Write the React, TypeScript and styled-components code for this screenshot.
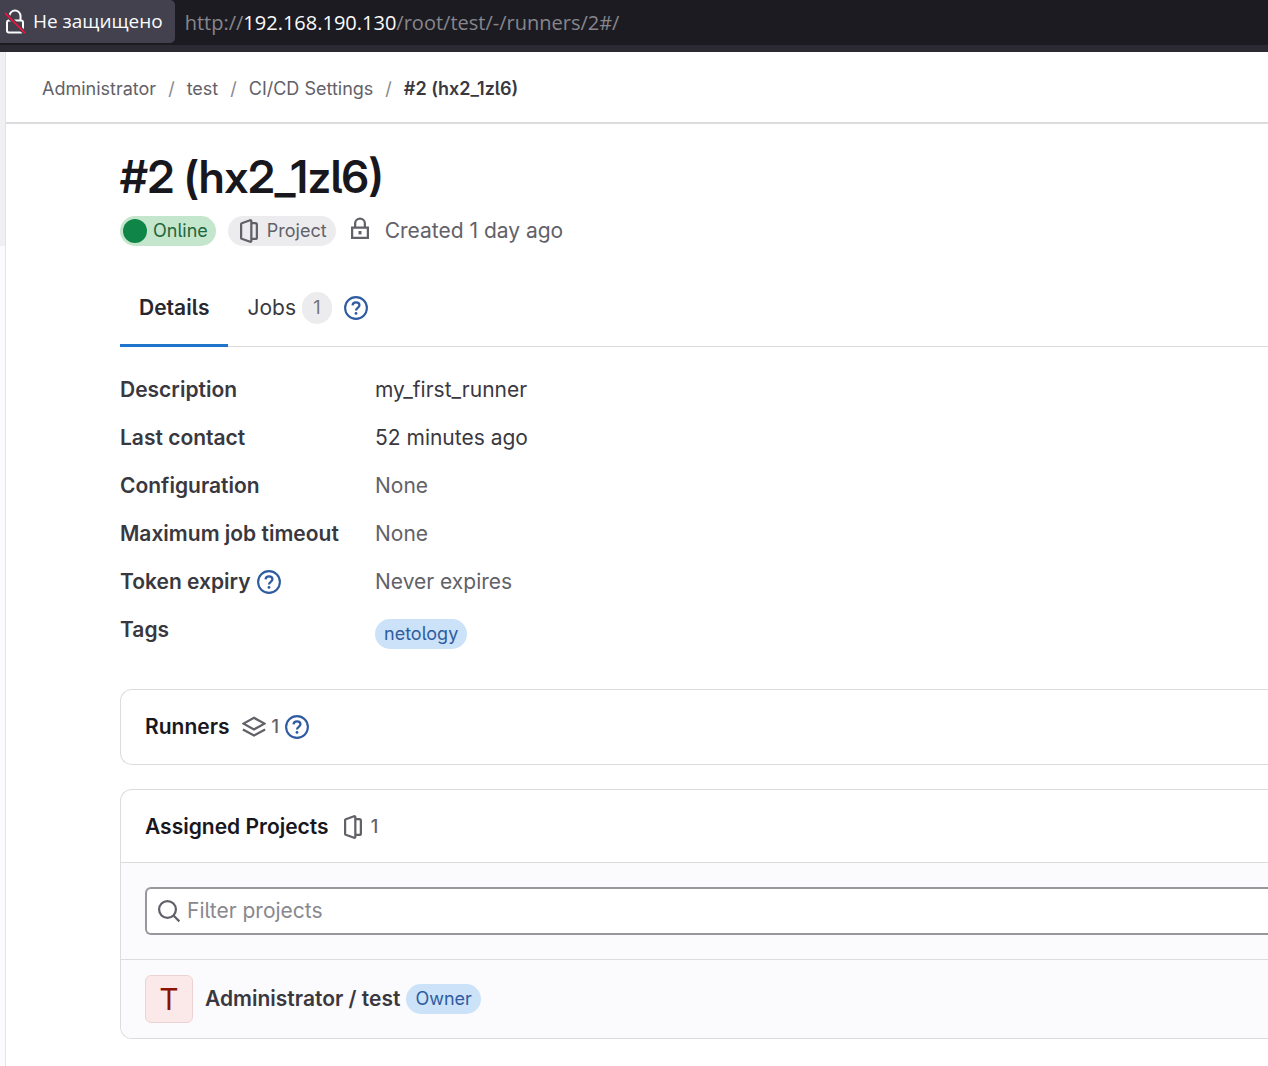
import React from 'react';
import styled, { createGlobalStyle } from 'styled-components';

const GlobalStyle = createGlobalStyle`
  *, *::before, *::after { box-sizing: border-box; }
  html, body, #root { min-height: 100vh; }
  body {
    margin: 0;
    background: #fff;
    color: #3a383f;
    font-family: Inter, "Noto Sans", sans-serif;
    font-feature-settings: "cv05";
    font-size: 21px;
    line-height: 30px;
  }
  h1, h2, p, ol, ul, dl, dd { margin: 0; padding: 0; }
  ol, ul { list-style: none; }
  a { color: inherit; text-decoration: none; }
  button { font: inherit; color: inherit; background: none; border: 0; padding: 0; cursor: pointer; }
  svg { display: block; flex: none; }
`;

const Page = styled.div`
  min-height: 100vh;
  display: flex;
  flex-direction: column;
`;

const BrowserBar = styled.header`
  display: flex;
  align-items: flex-start;
  gap: 10px;
  height: 52px;
  background: #1c1b22;
  border-bottom: 7px solid #2b2a33;
  font-family: "Open Sans", "Noto Sans", sans-serif;
  font-size: 20px;
  line-height: 45px;
  white-space: nowrap;
`;

const Security = styled.button`
  display: flex;
  align-items: center;
  gap: 7px;
  height: 43px;
  padding: 0 12px 0 4px;
  border-radius: 0 5px 5px 0;
  background: #42414d;
  color: #fbfbfe;
  font-size: 19px;
`;

const Address = styled.p`
  color: #87868c;
  strong { color: #fbfbfe; font-weight: 400; }
`;

const Body = styled.div`
  flex: 1;
  display: flex;
`;

const Rail = styled.aside`
  width: 6px;
  border-right: 1px solid #e3e3e6;
  background: linear-gradient(#f0f0f2, #f0f0f2) top / 100% 194px no-repeat #fbfafd;
`;

const Content = styled.div`
  flex: 1;
  min-width: 0;
`;

const Breadcrumbs = styled.nav`
  padding: 22px 36px 18px;
  border-bottom: 2px solid #dcdcde;
  color: #626168;
  font-size: 18px;
  ol { display: flex; }
  li + li::before {
    content: "/";
    margin: 0 12px;
    color: #89888d;
  }
  [aria-current] { font-weight: 600; color: #3a383f; }
`;

const Main = styled.main`
  padding: 23px 0 27px 114px;
`;

const Title = styled.h1`
  color: #18171d;
  font-family: "Inter Display", Inter, sans-serif;
  font-size: 45px;
  line-height: 60px;
  font-weight: 600;
`;

const Meta = styled.div`
  display: flex;
  align-items: center;
  gap: 12px;
  height: 48px;
  color: #626168;
`;

const tones = {
  success: ['#c3e6cd', '#24663b'],
  neutral: ['#ececef', '#626168'],
  info: ['#cbe2f9', '#2f5ca0'],
};

const Badge = styled.span<{ $tone: keyof typeof tones }>`
  display: inline-flex;
  align-items: center;
  gap: 6px;
  height: 30px;
  padding: 0 9px;
  border-radius: 15px;
  font-size: 18px;
  background: ${(p) => tones[p.$tone][0]};
  color: ${(p) => tones[p.$tone][1]};
`;

const StatusBadge = styled(Badge)`
  padding: 0 8px 0 3px;
`;

const Created = styled.span`
  display: flex;
  align-items: flex-start;
  gap: 13px;
`;

const Tabs = styled.div`
  display: flex;
  height: 78px;
  margin-top: 14px;
  border-bottom: 1px solid #dcdcde;
`;

const Tab = styled.button<{ $active?: boolean }>`
  display: flex;
  align-items: center;
  gap: 6px;
  height: 78px;
  padding: 3px 19px 0;
  color: ${(p) => (p.$active ? '#28272d' : '#3a383f')};
  font-weight: ${(p) => (p.$active ? 600 : 400)};
  border-bottom: 3px solid ${(p) => (p.$active ? '#1f75cb' : 'transparent')};
`;

const JobsTab = styled.div`
  display: flex;
  align-items: center;
  ${Tab} { padding-right: 12px; }
`;

const Count = styled.span`
  min-width: 30px;
  height: 32px;
  border-radius: 16px;
  background: #ececef;
  color: #737278;
  font-size: 18px;
  line-height: 32px;
`;

const Help = styled.button`
  display: inline-flex;
  color: #2f5ca0;
`;

const Details = styled.dl`
  display: grid;
  grid-template-columns: 231px 1fr;
  gap: 18px 24px;
  padding: 28px 0 40px;
`;

const Term = styled.dt`
  display: flex;
  align-items: center;
  gap: 6px;
  font-weight: 600;
  height: 30px;
`;

const Value = styled.dd<{ $muted?: boolean }>`
  color: ${(p) => (p.$muted ? '#626168' : '#3a383f')};
`;

const TagList = styled.dd`
  display: flex;
  padding-top: 4px;
`;

const Card = styled.section`
  border: 1px solid #dcdcde;
  border-right: 0;
  border-radius: 12px 0 0 12px;
  overflow: hidden;
  & + & { margin-top: 24px; }
`;

const CardHeader = styled.header`
  display: flex;
  align-items: center;
  padding: 22px 24px 20px;
  &:last-child { padding-bottom: 22px; }
  h2 {
    margin-right: 12px;
    color: #18171d;
    font-size: 21px;
    line-height: 30px;
    font-weight: 600;
  }
`;

const CardCount = styled.span`
  display: flex;
  align-items: center;
  gap: 6px;
  margin-right: 6px;
  color: #626168;
  font-size: 18px;
  font-weight: 500;
`;

const CardRow = styled.div`
  display: flex;
  align-items: center;
  gap: 12px;
  padding: 15px 24px;
  border-top: 1px solid #dcdcde;
  background: #fbfafd;
`;

const FilterRow = styled(CardRow)`
  padding: 24px 0 24px 24px;
`;

const Search = styled.label`
  flex: 1;
  display: flex;
  align-items: center;
  gap: 6px;
  height: 48px;
  padding-left: 10px;
  border: 2px solid #98979c;
  border-right: 0;
  border-radius: 6px 0 0 6px;
  background: #fff;
  color: #626168;
  input {
    flex: 1;
    min-width: 0;
    padding: 0;
    border: 0;
    outline: 0;
    background: none;
    font: inherit;
    color: #3a383f;
  }
  input::placeholder { color: #89888d; opacity: 1; }
`;

const Avatar = styled.span`
  width: 48px;
  height: 48px;
  border: 1px solid #ecd3d3;
  border-radius: 6px;
  background: #fbe9e9;
  color: #8d1300;
  font-size: 30px;
  line-height: 46px;
  text-align: center;
`;

const ProjectName = styled.span`
  display: flex;
  align-items: center;
  gap: 6px;
  a { font-weight: 600; }
`;

const Icon = ({ children }: { children: React.ReactNode }) => (
  <svg width="24" height="24" viewBox="0 0 16 16" fill="none" stroke="currentColor" strokeWidth="1.5" aria-hidden="true">
    {children}
  </svg>
);

const ProjectIcon = () => (
  <Icon>
    <path d="M2.750 3.400a.6.6 0 0 1 .4-.56l5.600-2a.6.6 0 0 1 .8.56v13.200a.6.6 0 0 1-.8.56l-5.600-2a.6.6 0 0 1-.4-.56z" />
    <path d="M9.800 2.750h2.450a1 1 0 0 1 1 1v8.500a1 1 0 0 1-1 1H9.800" />
  </Icon>
);

const LockIcon = () => (
  <Icon>
    <path d="M2.750 7.750h10.500v6.750H2.750zM4.750 7.500V5a3.250 3.250 0 0 1 6.500 0v2.500" />
    <path d="M8 10v2.300" strokeWidth="2" />
  </Icon>
);

const LayersIcon = () => (
  <Icon>
    <path d="M8 1.900l7 3.850-7 3.850-7-3.850zM.6 9.600L8 13.700l7.400-4.100" />
  </Icon>
);

const SearchIcon = () => (
  <Icon>
    <circle cx="7" cy="7" r="5.600" />
    <path d="M11 11l3.900 3.900" />
  </Icon>
);

const HelpButton = ({ label }: { label: string }) => (
  <Help type="button" aria-label={label}>
    <Icon>
      <circle cx="8" cy="8" r="7.250" strokeWidth="1.400" />
      <path d="M5.700 6.200C5.800 4.900 6.800 4.200 8 4.200c1.300 0 2.300.8 2.300 2 0 1.700-2.300 1.700-2.300 3.400" />
      <circle cx="8" cy="11.600" r=".95" fill="currentColor" stroke="none" />
    </Icon>
  </Help>
);

const InsecureIcon = () => (
  <svg width="22" height="26" viewBox="0 0 22 26" fill="none" aria-hidden="true">
    <path d="M5.500 11.500V7a5.500 5.500 0 0 1 11 0v4.500" stroke="#fbfbfe" strokeWidth="2" />
    <rect x="3" y="11.500" width="16" height="12" rx="2" stroke="#fbfbfe" strokeWidth="2" />
    <path d="M1 4l20 20" stroke="#42414d" strokeWidth="4" />
    <path d="M1 4l20 20" stroke="#ff0f3f" strokeWidth="1.700" />
  </svg>
);

export default function App() {
  return (
    <Page>
      <GlobalStyle />
      <BrowserBar>
        <Security type="button">
          <InsecureIcon />
          Не защищено
        </Security>
        <Address>
          http://<strong>192.168.190.130</strong>/root/test/-/runners/2#/
        </Address>
      </BrowserBar>
      <Body>
        <Rail />
        <Content>
          <Breadcrumbs aria-label="Breadcrumb">
            <ol>
              <li><a href="#admin">Administrator</a></li>
              <li><a href="#test">test</a></li>
              <li><a href="#ci">CI/CD Settings</a></li>
              <li><a href="#runner" aria-current="page">#2 (hx2_1zl6)</a></li>
            </ol>
          </Breadcrumbs>
          <Main>
            <Title>#2 (hx2_1zl6)</Title>
            <Meta>
              <StatusBadge $tone="success">
                <svg width="24" height="24" viewBox="0 0 24 24" aria-hidden="true">
                  <circle cx="12" cy="12" r="12" fill="#108548" />
                </svg>
                Online
              </StatusBadge>
              <Badge $tone="neutral">
                <ProjectIcon />
                Project
              </Badge>
              <Created>
                <LockIcon />
                Created 1 day ago
              </Created>
            </Meta>
            <Tabs role="tablist">
              <Tab type="button" role="tab" aria-selected="true" $active>Details</Tab>
              <JobsTab>
                <Tab type="button" role="tab" aria-selected="false">
                  Jobs <Count>1</Count>
                </Tab>
                <HelpButton label="About jobs" />
              </JobsTab>
            </Tabs>
            <Details>
              <Term>Description</Term>
              <Value>my_first_runner</Value>
              <Term>Last contact</Term>
              <Value>52 minutes ago</Value>
              <Term>Configuration</Term>
              <Value $muted>None</Value>
              <Term>Maximum job timeout</Term>
              <Value $muted>None</Value>
              <Term>Token expiry <HelpButton label="About token expiry" /></Term>
              <Value $muted>Never expires</Value>
              <Term>Tags</Term>
              <TagList><Badge $tone="info">netology</Badge></TagList>
            </Details>
            <Card>
              <CardHeader>
                <h2>Runners</h2>
                <CardCount><LayersIcon />1</CardCount>
                <HelpButton label="About runners" />
              </CardHeader>
            </Card>
            <Card>
              <CardHeader>
                <h2>Assigned Projects</h2>
                <CardCount><ProjectIcon />1</CardCount>
              </CardHeader>
              <FilterRow>
                <Search>
                  <SearchIcon />
                  <input type="search" placeholder="Filter projects" aria-label="Filter projects" />
                </Search>
              </FilterRow>
              <CardRow>
                <Avatar>T</Avatar>
                <ProjectName>
                  <a href="#project">Administrator / test</a>
                  <Badge $tone="info">Owner</Badge>
                </ProjectName>
              </CardRow>
            </Card>
          </Main>
        </Content>
      </Body>
    </Page>
  );
}
